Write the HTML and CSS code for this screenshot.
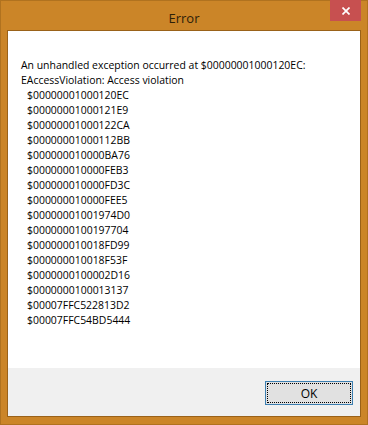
FILE: index.html
```html
<!DOCTYPE html>
<html lang="en">
<head>
    <meta charset="UTF-8">
    <meta name="viewport" content="width=device-width, initial-scale=1.0">
    <title>Error</title>
    <link rel="stylesheet" href="styles.css">
</head>
<body>

<div class="window">
    <div class="titlebar">
        <span></span>
        <span class="title">Error</span>
        <button class="close" aria-label="Close">
            <svg width="8" height="8" viewBox="0 0 8 8">
                <path d="M0.5 0.5 L7.5 7.5 M7.5 0.5 L0.5 7.5" stroke="#fff" stroke-width="1.7" fill="none"/>
            </svg>
        </button>
    </div>

    <div class="client">
        <div class="message">
            <p>An unhandled exception occurred at $00000001000120EC:</p>
            <p>EAccessViolation: Access violation</p>
            <div class="stack">
                <div>$00000001000120EC</div>
                <div>$00000001000121E9</div>
                <div>$00000001000122CA</div>
                <div>$00000001000112BB</div>
                <div>$000000010000BA76</div>
                <div>$000000010000FEB3</div>
                <div>$000000010000FD3C</div>
                <div>$000000010000FEE5</div>
                <div>$00000001001974D0</div>
                <div>$0000000100197704</div>
                <div>$000000010018FD99</div>
                <div>$000000010018F53F</div>
                <div>$0000000100002D16</div>
                <div>$0000000100013137</div>
                <div>$00007FFC522813D2</div>
                <div>$00007FFC54BD5444</div>
            </div>
        </div>

        <div class="footer">
            <button class="ok">OK</button>
        </div>
    </div>
</div>

</body>
</html>
```

FILE: styles.css
```css
body {
    margin: 0;
    background-color: #fff;
    font-family: "Open Sans", "Noto Sans", sans-serif;
}

.window {
    width: 368px;
    height: 425px;
    box-sizing: border-box;
    background-color: #cb8528;
    border: 1px solid #b0721f;
    padding: 0 6px 7px 6px;
    display: flex;
    flex-direction: column;
}

.titlebar {
    height: 29px;
    margin: 0 -6px;
    display: grid;
    grid-template-columns: 1fr auto 1fr;
    align-items: start;
}

.title {
    padding-top: 8px;
    font-size: 13px;
    color: #2e2009;
}

.close {
    justify-self: end;
    width: 31px;
    height: 21px;
    margin-top: -1px;
    margin-right: 6px;
    padding: 0;
    border: none;
    background-color: #c75050;
    display: flex;
    justify-content: center;
    align-items: center;
}

.client {
    flex: 1;
    border: 1px solid #9a6219;
    display: flex;
    flex-direction: column;
}

.message {
    flex: 1;
    background-color: #fff;
    padding: 27px 13px 0 13px;
    font-size: 10.45px;
    line-height: 15px;
    color: #000;
}

.message p {
    margin: 0;
}

.stack {
    padding-left: 6px;
}

.footer {
    height: 48px;
    box-sizing: border-box;
    background-color: #f0f0f0;
    display: flex;
    justify-content: flex-end;
    align-items: flex-start;
    padding: 13px 7px 0 0;
}

.ok {
    width: 88px;
    height: 24px;
    padding: 0;
    border: 1px solid #3c7fb1;
    background-color: #e1e1e1;
    font-family: "Open Sans", "Noto Sans", sans-serif;
    font-size: 12px;
    color: #000;
    outline: 1px dotted #000;
    outline-offset: -3px;
}
```
